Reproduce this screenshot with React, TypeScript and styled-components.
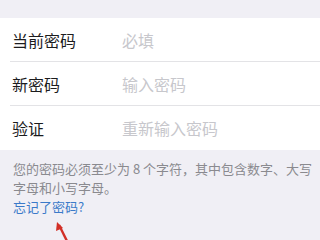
import styled, { createGlobalStyle } from "styled-components";

const GlobalStyle = createGlobalStyle`
  html, body {
    margin: 0;
    padding: 0;
    background: #f0eff5;
  }
  body {
    font-family: "Noto Sans CJK SC", "Noto Sans", sans-serif;
    -webkit-font-smoothing: antialiased;
  }
`;

const rows = [
  { label: "当前密码", placeholder: "必填" },
  { label: "新密码", placeholder: "输入密码" },
  { label: "验证", placeholder: "重新输入密码" },
];

const App = () => {
  return (
    <>
      <GlobalStyle />
      <Page>
        <Group>
          {rows.map((row, i) => (
            <Row key={row.label} $last={i === rows.length - 1}>
              <Label>{row.label}</Label>
              <Placeholder>{row.placeholder}</Placeholder>
            </Row>
          ))}
        </Group>
        <Footer>
          <Note>
            您的密码必须至少为 8 个字符，其中包含数字、大写字母和小写字母。
          </Note>
          <Link>忘记了密码?</Link>
        </Footer>
        <Arrow width="40" height="40" viewBox="0 0 40 40">
          <line x1="7" y1="4" x2="19" y2="28" stroke="#d22f27" strokeWidth="2.4" />
          <polygon points="5,1 4,10 11,7" fill="#d22f27" />
        </Arrow>
      </Page>
    </>
  );
};

export default App;

const Page = styled.div`
  position: relative;
  width: 320px;
  height: 240px;
  overflow: hidden;
  background: #f0eff5;
  padding-top: 18px;
  box-sizing: border-box;
`;

const Group = styled.div`
  background: #ffffff;
  display: flex;
  flex-direction: column;
`;

const Row = styled.div<{ $last: boolean }>`
  display: flex;
  align-items: center;
  height: 44px;
  margin-left: 10px;
  padding-left: 2px;
  box-sizing: border-box;
  border-bottom: ${(p) => (p.$last ? "none" : "1px solid #e3e3e6")};
`;

const Label = styled.div`
  width: 110px;
  font-size: 16px;
  color: #1c1c1e;
`;

const Placeholder = styled.div`
  font-size: 16px;
  color: #c7c7cc;
`;

const Footer = styled.div`
  padding: 9px 6px 0 13px;
  display: flex;
  flex-direction: column;
`;

const Note = styled.div`
  font-size: 13px;
  line-height: 19px;
  color: #8a8a8f;
`;

const Link = styled.div`
  font-size: 13px;
  line-height: 19px;
  color: #3a7ac9;
`;

const Arrow = styled.svg`
  position: absolute;
  left: 52px;
  top: 221px;
`;
